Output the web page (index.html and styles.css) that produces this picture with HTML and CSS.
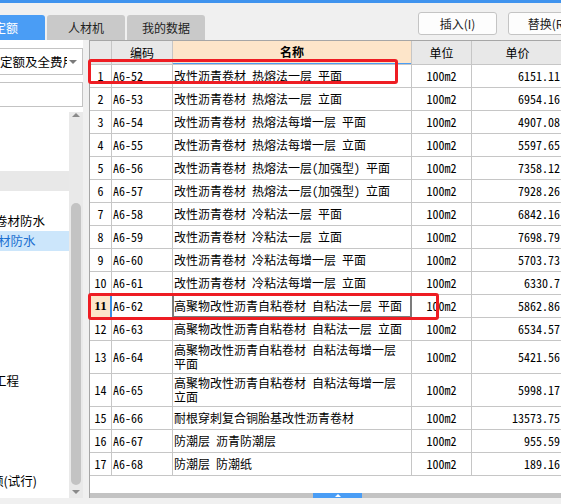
FILE: index.html
```html
<!DOCTYPE html>
<html lang="zh-CN">
<head>
<meta charset="utf-8">
<title>定额</title>
<link rel="stylesheet" href="styles.css">
</head>
<body>
<div class="topbar"></div>
<div class="toolbar">
  <div class="tabs">
    <div class="tab active">定额</div>
    <div class="tab">人材机</div>
    <div class="tab">我的数据</div>
  </div>
  <div class="actions">
    <button class="btn">插入(I)</button>
    <button class="btn">替换(R)</button>
  </div>
</div>
<div class="main">
  <aside class="left">
    <div class="select"><span class="select-text">定额及全费用清单</span><span class="caret"></span></div>
    <div class="search"></div>
    <div class="tree">
      <div class="tree-body">
        <div class="tree-top"></div>
        <div class="tree-band"></div>
        <div class="tree-row"></div>
        <div class="tree-row"><span class="shift4">卷材防水</span></div>
        <div class="tree-row selected"><span class="shift1">材防水</span></div>
        <div class="tree-row"></div>
        <div class="tree-row"></div>
        <div class="tree-row"></div>
        <div class="tree-row"></div>
        <div class="tree-row"></div>
        <div class="tree-row"></div>
        <div class="tree-row"><span class="shift5">工程</span></div>
        <div class="tree-row"></div>
        <div class="tree-row"></div>
        <div class="tree-row"></div>
        <div class="tree-row"></div>
        <div class="tree-row"><span class="shift6">额(试行)</span></div>
      </div>
      <div class="vscroll">
        <div class="arrow-up"></div>
        <div class="vtrack"><div class="vthumb"></div></div>
        <div class="arrow-down"></div>
      </div>
    </div>
  </aside>
  <section class="pane">
    <div class="grid">
      <div class="hd"></div>
      <div class="hd">编码</div>
      <div class="hd name-hd">名称</div>
      <div class="hd">单位</div>
      <div class="hd">单价</div>

      <div class="no">1</div><div class="code">A6-52</div><div class="name">改性沥青卷材 热熔法一层 平面</div><div class="unit">100m2</div><div class="price">6151.11</div>
      <div class="no">2</div><div class="code">A6-53</div><div class="name">改性沥青卷材 热熔法一层 立面</div><div class="unit">100m2</div><div class="price">6954.16</div>
      <div class="no">3</div><div class="code">A6-54</div><div class="name">改性沥青卷材 热熔法每增一层 平面</div><div class="unit">100m2</div><div class="price">4907.08</div>
      <div class="no">4</div><div class="code">A6-55</div><div class="name">改性沥青卷材 热熔法每增一层 立面</div><div class="unit">100m2</div><div class="price">5597.65</div>
      <div class="no">5</div><div class="code">A6-56</div><div class="name">改性沥青卷材 热熔法一层(加强型) 平面</div><div class="unit">100m2</div><div class="price">7358.12</div>
      <div class="no">6</div><div class="code">A6-57</div><div class="name">改性沥青卷材 热熔法一层(加强型) 立面</div><div class="unit">100m2</div><div class="price">7928.26</div>
      <div class="no">7</div><div class="code">A6-58</div><div class="name">改性沥青卷材 冷粘法一层 平面</div><div class="unit">100m2</div><div class="price">6842.16</div>
      <div class="no">8</div><div class="code">A6-59</div><div class="name">改性沥青卷材 冷粘法一层 立面</div><div class="unit">100m2</div><div class="price">7698.79</div>
      <div class="no">9</div><div class="code">A6-60</div><div class="name">改性沥青卷材 冷粘法每增一层 平面</div><div class="unit">100m2</div><div class="price">5703.73</div>
      <div class="no">10</div><div class="code">A6-61</div><div class="name">改性沥青卷材 冷粘法每增一层 立面</div><div class="unit">100m2</div><div class="price">6330.7</div>
      <div class="no current">11</div><div class="code current">A6-62</div><div class="name current">高聚物改性沥青自粘卷材 自粘法一层 平面</div><div class="unit">100m2</div><div class="price">5862.86</div>
      <div class="no">12</div><div class="code">A6-63</div><div class="name">高聚物改性沥青自粘卷材 自粘法一层 立面</div><div class="unit">100m2</div><div class="price">6534.57</div>
      <div class="no">13</div><div class="code">A6-64</div><div class="name">高聚物改性沥青自粘卷材 自粘法每增一层 平面</div><div class="unit">100m2</div><div class="price">5421.56</div>
      <div class="no">14</div><div class="code">A6-65</div><div class="name">高聚物改性沥青自粘卷材 自粘法每增一层 立面</div><div class="unit">100m2</div><div class="price">5998.17</div>
      <div class="no">15</div><div class="code">A6-66</div><div class="name">耐根穿刺复合铜胎基改性沥青卷材</div><div class="unit">100m2</div><div class="price">13573.75</div>
      <div class="no">16</div><div class="code">A6-67</div><div class="name">防潮层 沥青防潮层</div><div class="unit">100m2</div><div class="price">955.59</div>
      <div class="no">17</div><div class="code">A6-68</div><div class="name">防潮层 防潮纸</div><div class="unit">100m2</div><div class="price">189.16</div>
    </div>
    <div class="filler"></div>
    <div class="hscroll"><div class="hthumb"></div></div>
  </section>
</div>
<div class="statusbar"></div>
<div class="mark mark-1"></div>
<div class="mark mark-2"></div>
</body>
</html>
```
FILE: styles.css
```css
* { box-sizing: border-box; }
html, body { margin: 0; padding: 0; }
body {
  width: 561px;
  height: 504px;
  overflow: hidden;
  position: relative;
  background: #f0f0f0;
  font-family: "Noto Sans CJK SC", "Noto Sans", sans-serif;
  font-size: 12px;
  color: #000;
}
.topbar { height: 3px; background: #3f93ee; }
.toolbar { height: 37px; display: flex; align-items: flex-start; }
.tabs { display: flex; gap: 2px; margin-top: 12px; margin-left: -33px; }
.tab {
  width: 78px; height: 25px;
  background: #c9c9c9; color: #222;
  border-radius: 3px 3px 0 0;
  display: flex; align-items: center; justify-content: center;
  font-size: 12px; line-height: 14px;
}
.tab.active { background: #4a9df5; color: #fff; }
.actions { display: flex; gap: 11px; margin-top: 9px; margin-left: 213px; }
.btn {
  flex: none;
  width: 79px; height: 23px; padding: 0;
  background: #fdfdfd; border: 1px solid #c4c4c4; border-radius: 3px;
  font-family: "Noto Sans CJK SC", sans-serif; font-size: 12px; color: #222;
  line-height: 14px;
}
.main { display: flex; height: 458px; }
.left { width: 83px; flex: none; background: #fff; overflow: hidden; display: flex; flex-direction: column; }
.select {
  margin-top: 8px; margin-left: -12px; width: 95px; height: 27px; flex: none;
  border: 1px solid #c3c3c3; position: relative;
  display: flex; align-items: center;
}
.select-text { width: 78px; padding-left: 11px; white-space: nowrap; overflow: hidden; font-size: 12.5px; line-height: 14px; }
.caret {
  margin-left: 0; width: 0; height: 0;
  border-left: 4px solid transparent; border-right: 4px solid transparent;
  border-top: 4px solid #7a7a7a;
  margin-left: 2px;
}
.search { margin-top: 7px; margin-left: -12px; width: 95px; height: 25px; flex: none; border: 1px solid #c3c3c3; }
.tree { margin-top: 5px; flex: 1; display: flex; min-height: 0; }
.tree-body { width: 69px; flex: none; overflow: hidden; }
.tree-top { height: 59px; }
.tree-band { height: 20px; background: #e8e8e8; }
.tree-row { height: 20px; display: flex; align-items: center; white-space: nowrap; font-size: 12.5px; line-height: 14px; }
.tree-row.selected { background: #cce6fb; color: #1a6fd0; }
.shift1 { margin-left: -2px; }
.shift4 { margin-left: -5px; }
.shift5 { margin-left: -6px; }
.shift6 { margin-left: -9px; }
.vscroll { width: 14px; flex: none; background: #e9e9e9; display: flex; flex-direction: column; align-items: center; }
.arrow-up {
  margin-top: 1px; height: 11px; width: 0;
  border-left: 4px solid transparent; border-right: 4px solid transparent;
  border-bottom: 4px solid #8a8a8a; border-top: 0;
  height: 4px;
}
.vtrack { flex: 1; width: 10px; }
.vthumb { margin-top: 86px; height: 282px; width: 10px; border-radius: 5px; background: #c3c3c3; }
.arrow-down {
  margin-bottom: 4px; width: 0; height: 4px;
  border-left: 4px solid transparent; border-right: 4px solid transparent;
  border-top: 4px solid #8a8a8a;
}
.pane {
  flex: 1; min-width: 0; margin-left: 6px;
  background: #fff;
  border-top: 1px solid #a6a6a6; border-left: 1px solid #a6a6a6;
  overflow: hidden;
  display: flex; flex-direction: column;
}
.grid {
  width: 474px; flex: none;
  display: grid;
  grid-template-columns: 21px 60px 238px 59px 91px;
  grid-template-rows: 23px repeat(12, 22px) 32px 32px repeat(3, 22px);
  gap: 1px;
  padding-bottom: 1px;
  background: #c6c6c6;
  font-family: "Noto Sans Mono CJK SC", "Noto Sans CJK SC", monospace;
  font-size: 12px;
  line-height: 14px;
}
.grid > div { background: #fff; display: flex; align-items: center; min-width: 0; white-space: nowrap; }
.grid > .hd { background: #e8e8e8; justify-content: center; font-family: "Noto Sans CJK SC", sans-serif; }
.grid > .name-hd { background: #fde5c9; font-weight: bold; border-bottom: 1px solid #4a9df5; }
.grid > .no { justify-content: center; }
.grid > .code { padding-left: 1px; }
.grid > .name { padding-left: 1px; white-space: normal; }
.grid > .unit { justify-content: center; }
.grid > .price { justify-content: flex-end; padding-right: 3px; }
.grid > .no.current { background: #fde5c9; font-family: "Liberation Serif", serif; font-weight: bold; font-size: 13px; }
.grid > .code.current { box-shadow: -2px 0 0 #3a8ee6; }
.grid > .name.current { box-shadow: 0 0 0 1px #7c7c7c, inset 0 0 0 1px #7c7c7c; }
.filler { flex: 1; }
.hscroll { height: 5px; flex: none; background: #c3c3c3; position: relative; }
.hthumb {
  margin-left: 223px; width: 49px; height: 5px; background: #4a9df5;
  display: flex; justify-content: center; align-items: center;
}
.hthumb::after {
  content: ""; width: 0; height: 0;
  border-left: 3px solid transparent; border-right: 3px solid transparent;
  border-bottom: 3px solid #fff;
}
.statusbar { height: 6px; background: #f0f0f0; }
.mark { position: absolute; border: 3px solid #ee1d23; border-radius: 3px; }
.mark-1 { left: 88px; top: 59px; width: 310px; height: 25px; }
.mark-2 { left: 88px; top: 293px; width: 351px; height: 27px; }
```
